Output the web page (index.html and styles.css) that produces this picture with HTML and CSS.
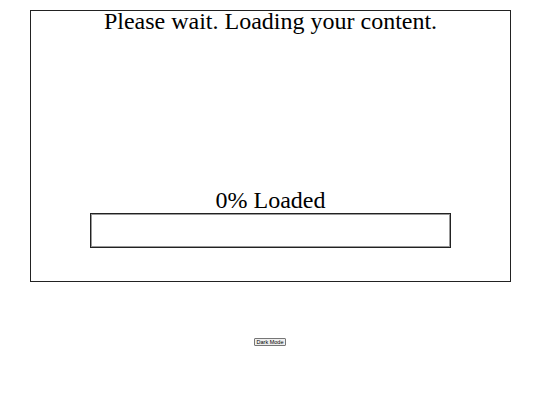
FILE: index.html
```html
<!DOCTYPE html>
<html lang="en">
<head>
<meta charset="utf-8">
<title>Loading</title>
<link rel="stylesheet" href="styles.css">
</head>
<body>
  <main class="panel">
    <h1 class="title">Please wait. Loading your content.</h1>
    <p class="status">0% Loaded</p>
    <div class="bar"><div class="fill" style="width:0%"></div></div>
  </main>
  <div class="controls">
    <button class="mode-btn" type="button">Dark Mode</button>
  </div>
</body>
</html>
```

FILE: styles.css
```css
html, body {
  margin: 0;
  padding: 0;
  background: #ffffff;
}

body {
  font-family: "Liberation Serif", "Times New Roman", serif;
  color: #000000;
}

.panel {
  box-sizing: border-box;
  width: 481px;
  height: 272px;
  margin: 10px 0 0 30px;
  border: 1px solid #222222;
  display: flex;
  flex-direction: column;
  align-items: center;
  padding-bottom: 33px;
}

.title {
  margin: 1px 0 0 0;
  font-size: 24px;
  font-weight: normal;
  line-height: 18px;
  text-align: center;
}

.status {
  margin: auto 0 0 0;
  font-size: 24px;
  line-height: 26px;
  text-align: center;
}

.bar {
  box-sizing: border-box;
  width: 361px;
  height: 35px;
  border: 1px solid #222222;
  box-shadow: inset 0 0 0 1px #999999;
  background: #ffffff;
}

.fill {
  height: 100%;
  background: #4a90e2;
}

.controls {
  display: flex;
  justify-content: center;
  margin-top: 56px;
}

.mode-btn {
  box-sizing: border-box;
  height: 8px;
  padding: 0 2px;
  margin: 0;
  font-family: "Liberation Sans", Arial, sans-serif;
  font-size: 5.5px;
  line-height: 6px;
  color: #000000;
  background: #efefef;
  border: 1px solid #767676;
  border-radius: 1px;
}
```
